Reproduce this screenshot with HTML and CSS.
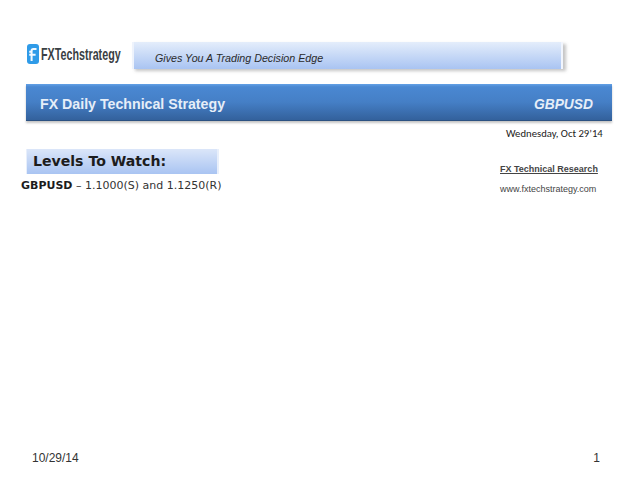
FILE: index.html
```html
<!DOCTYPE html>
<html lang="en">
<head>
<meta charset="utf-8">
<title>FX Daily Technical Strategy</title>
<link rel="stylesheet" href="styles.css">
</head>
<body>
<main class="slide">
  <header class="top">
    <div class="logo">
      <svg class="logo-mark" width="12" height="20" viewBox="0 0 12 20" aria-hidden="true">
        <rect x="0" y="0" width="12" height="20" rx="3" fill="#2f9be8"/>
        <path d="M9.5 5H6.4C5.3 5 4.6 5.7 4.6 6.8V17M2.2 10.8H8.6M2.2 7.8H4.6" fill="none" stroke="#f2f9ff" stroke-width="2"/>
      </svg>
      <span class="logo-text">FXTechstrategy</span>
    </div>
    <div class="tagline">Gives You A Trading Decision Edge</div>
  </header>
  <section class="banner">
    <h1 class="banner-title">FX Daily Technical Strategy</h1>
    <span class="banner-pair">GBPUSD</span>
  </section>
  <p class="date">Wednesday, Oct 29’14</p>
  <div class="content">
    <div class="levels">
      <h2 class="levels-title">Levels To Watch:</h2>
      <p class="levels-line"><b>GBPUSD</b> – 1.1000(S) and 1.1250(R)</p>
    </div>
    <aside class="research">
      <p class="research-name">FX Technical Research</p>
      <p class="research-url">www.fxtechstrategy.com</p>
    </aside>
  </div>
  <footer class="foot">
    <span>10/29/14</span>
    <span>1</span>
  </footer>
</main>
</body>
</html>
```
FILE: styles.css
```css
* { box-sizing: border-box; }
html, body { margin: 0; padding: 0; background: #fff; }
p, h1, h2 { margin: 0; }
.slide {
  width: 638px;
  height: 479px;
  padding-top: 42px;
  display: flex;
  flex-direction: column;
  font-family: "Liberation Sans", Arial, sans-serif;
  color: #222;
  overflow: hidden;
}
.top {
  display: flex;
  height: 27px;
  padding-left: 27px;
}
.logo {
  flex: none;
  width: 105px;
  height: 24px;
  display: flex;
  align-items: flex-start;
  gap: 2px;
  padding-top: 2px;
  overflow: hidden;
}
.logo-mark { flex: none; }
.logo-text {
  font-weight: 700;
  font-size: 16.5px;
  line-height: 20px;
  color: #3a3f44;
  white-space: nowrap;
  transform: scaleX(.65);
  transform-origin: left center;
}
.tagline {
  flex: none;
  width: 431px;
  height: 27px;
  padding-left: 21px;
  font-style: italic;
  font-size: 10.7px;
  line-height: 33px;
  color: #2a2a2a;
  background: linear-gradient(#e4edfb, #a9c4f2);
  border-left: 2px solid #eef3fc;
  border-right: 2px solid #f1f5fd;
  box-shadow: 3px 2px 3px rgba(90, 90, 90, .35);
}
.banner {
  width: 586px;
  height: 37px;
  margin: 15px 0 0 26px;
  padding: 4px 19px 0 14px;
  display: flex;
  align-items: center;
  justify-content: space-between;
  color: #e6eef8;
  background: linear-gradient(#63a1e6 0, #4a88d2 8%, #457fc6 50%, #33619c 100%);
  border-bottom: 1px solid #2c5282;
  box-shadow: 0 2px 2px rgba(90, 90, 90, .35);
}
.banner-title {
  font-size: 14.2px;
  font-weight: 700;
}
.banner-pair {
  font-size: 13.8px;
  font-weight: 700;
  font-style: italic;
}
.date {
  margin: 6px 0 0 506px;
  font-family: Carlito, Lato, sans-serif;
  font-size: 10.7px;
  line-height: 14px;
  white-space: nowrap;
}
.content {
  display: flex;
  justify-content: space-between;
  flex: 1;
}
.levels { padding-left: 21px; padding-top: 8px; }
.levels-title {
  width: 193px;
  height: 25px;
  margin-left: 5px;
  padding-left: 6px;
  font-family: "DejaVu Sans", Verdana, sans-serif;
  font-size: 14.1px;
  font-weight: 700;
  line-height: 25px;
  color: #1c1c1c;
  background: linear-gradient(#dbe6f9, #a9c4f2);
  border-left: 1px solid #e8effb;
  border-right: 2px solid #e8effb;
}
.levels-line {
  margin-top: 5px;
  font-family: "DejaVu Sans", Verdana, sans-serif;
  font-size: 11px;
  line-height: 14px;
  color: #333;
  white-space: nowrap;
}
.levels-line b { color: #1c1c1c; }
.research {
  width: 138px;
  padding-top: 22px;
  font-size: 9px;
  color: #444;
}
.research-name {
  font-weight: 700;
  line-height: 12px;
  text-decoration: underline;
}
.research-url {
  margin-top: 8px;
  line-height: 12px;
}
.foot {
  height: 28px;
  padding: 0 38px 0 32px;
  display: flex;
  justify-content: space-between;
  font-size: 12px;
  line-height: 14px;
  color: #333;
}
```
